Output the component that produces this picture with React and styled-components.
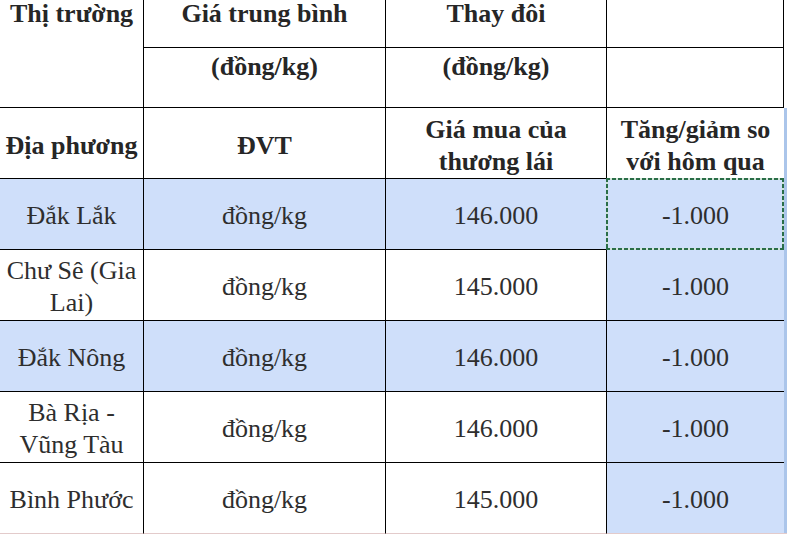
import styled, { createGlobalStyle } from 'styled-components';

const SERIF = `'Liberation Serif', Tinos, 'Times New Roman', 'DejaVu Serif', serif`;

const GlobalStyle = createGlobalStyle`
	html, body {
		margin: 0;
		padding: 0;
		background: #fff;
	}
	body {
		font-family: ${SERIF};
		color: #333;
		overflow: hidden;
	}
`;

const BLUE = '#cfdffa';
const LINE = '#000';

const rows = [
	{ place: 'Đắk Lắk', unit: 'đồng/kg', price: '146.000', diff: '-1.000', shaded: true, selected: true },
	{ place: 'Chư Sê (Gia Lai)', unit: 'đồng/kg', price: '145.000', diff: '-1.000' },
	{ place: 'Đắk Nông', unit: 'đồng/kg', price: '146.000', diff: '-1.000', shaded: true },
	{ place: 'Bà Rịa - Vũng Tàu', unit: 'đồng/kg', price: '146.000', diff: '-1.000' },
	{ place: 'Bình Phước', unit: 'đồng/kg', price: '145.000', diff: '-1.000', last: true },
];

function App() {
	return (
		<>
			<GlobalStyle />
			<Table>
				<colgroup>
					<col style={{ width: 144 }} />
					<col style={{ width: 242 }} />
					<col style={{ width: 221 }} />
					<col style={{ width: 177 }} />
					<col style={{ width: 3 }} />
				</colgroup>
				<tbody>
					<Row $h={48}>
						<TopHead rowSpan={2}>Thị trường</TopHead>
						<TopHead>Giá trung bình</TopHead>
						<TopHead>Thay đôi</TopHead>
						<TopHead />
						<Strip />
					</Row>
					<Row $h={60}>
						<TopHead $pad={6}>(đồng/kg)</TopHead>
						<TopHead $pad={6}>(đồng/kg)</TopHead>
						<TopHead />
						<Strip />
					</Row>
					<Row $h={71}>
						<Head>Địa phương</Head>
						<Head>ĐVT</Head>
						<Head>
							Giá mua của
							<br />
							thương lái
						</Head>
						<Head $noRight>
							Tăng/giảm so
							<br />
							với hôm qua
						</Head>
						<Strip $on />
					</Row>
					{rows.map((r) => (
						<Row $h={71} key={r.place}>
							<Cell $bg={r.shaded ? BLUE : '#fff'} $last={r.last}>
								{r.place}
							</Cell>
							<Cell $bg={r.shaded ? BLUE : '#fff'} $last={r.last}>
								{r.unit}
							</Cell>
							<Cell $bg={r.shaded ? BLUE : '#fff'} $last={r.last}>
								{r.price}
							</Cell>
							{r.selected ? (
								<SelectedCell $bg={BLUE}>{r.diff}</SelectedCell>
							) : (
								<Cell $bg={BLUE} $last={r.last} $noRight>
									{r.diff}
								</Cell>
							)}
							<Strip $on $last={r.last} />
						</Row>
					))}
				</tbody>
			</Table>
		</>
	);
}

export default App;

const Table = styled.table`
	width: 787px;
	table-layout: fixed;
	border-collapse: separate;
	border-spacing: 0;
	font-family: ${SERIF};
	font-size: 26px;
	color: #2e2e2e;
`;

const Row = styled.tr`
	height: ${({ $h }) => $h}px;
`;

const BaseCell = styled.td`
	box-sizing: border-box;
	font-family: ${SERIF};
	text-align: center;
	padding: 0 2px;
	border-right: 1px solid ${LINE};
	border-bottom: 1px solid ${LINE};
	line-height: 32px;
`;

const TopHead = styled(BaseCell)`
	vertical-align: top;
	font-weight: 700;
	line-height: 26px;
	padding-top: ${({ $pad }) => $pad || 1}px;
	color: #262626;
`;

const Head = styled(BaseCell)`
	vertical-align: middle;
	font-weight: 700;
	padding-top: 5px;
	color: #262626;
	${({ $noRight }) => $noRight && 'border-right: none;'}
`;

const Cell = styled(BaseCell)`
	vertical-align: middle;
	padding-top: 4px;
	background: ${({ $bg }) => $bg};
	${({ $noRight }) => $noRight && 'border-right: none;'}
	${({ $last }) => $last && 'border-bottom-color: #e3cbcb;'}
`;

const SelectedCell = styled(Cell)`
	position: relative;
	border-right: none;
	border-bottom-color: #cfe3d6;

	&::after {
		content: '';
		position: absolute;
		top: -1px;
		bottom: -1px;
		left: -1px;
		right: 0;
		pointer-events: none;
		background:
			repeating-linear-gradient(90deg, #2a6e48 0 4px, #cfe3d6 4px 6px) top / 100% 2px no-repeat,
			repeating-linear-gradient(90deg, #2a6e48 0 4px, #cfe3d6 4px 6px) bottom / 100% 2px no-repeat,
			repeating-linear-gradient(180deg, #2a6e48 0 4px, #cfe3d6 4px 6px) left / 2px 100% no-repeat,
			repeating-linear-gradient(180deg, #2a6e48 0 4px, #cfe3d6 4px 6px) right / 2px 100% no-repeat;
	}
`;

const Strip = styled.td`
	padding: 0;
	background: ${({ $on }) => ($on ? '#abc5ea' : 'transparent')};
	${({ $last }) => $last && 'border-bottom: 1px solid #e3cbcb;'}
`;
